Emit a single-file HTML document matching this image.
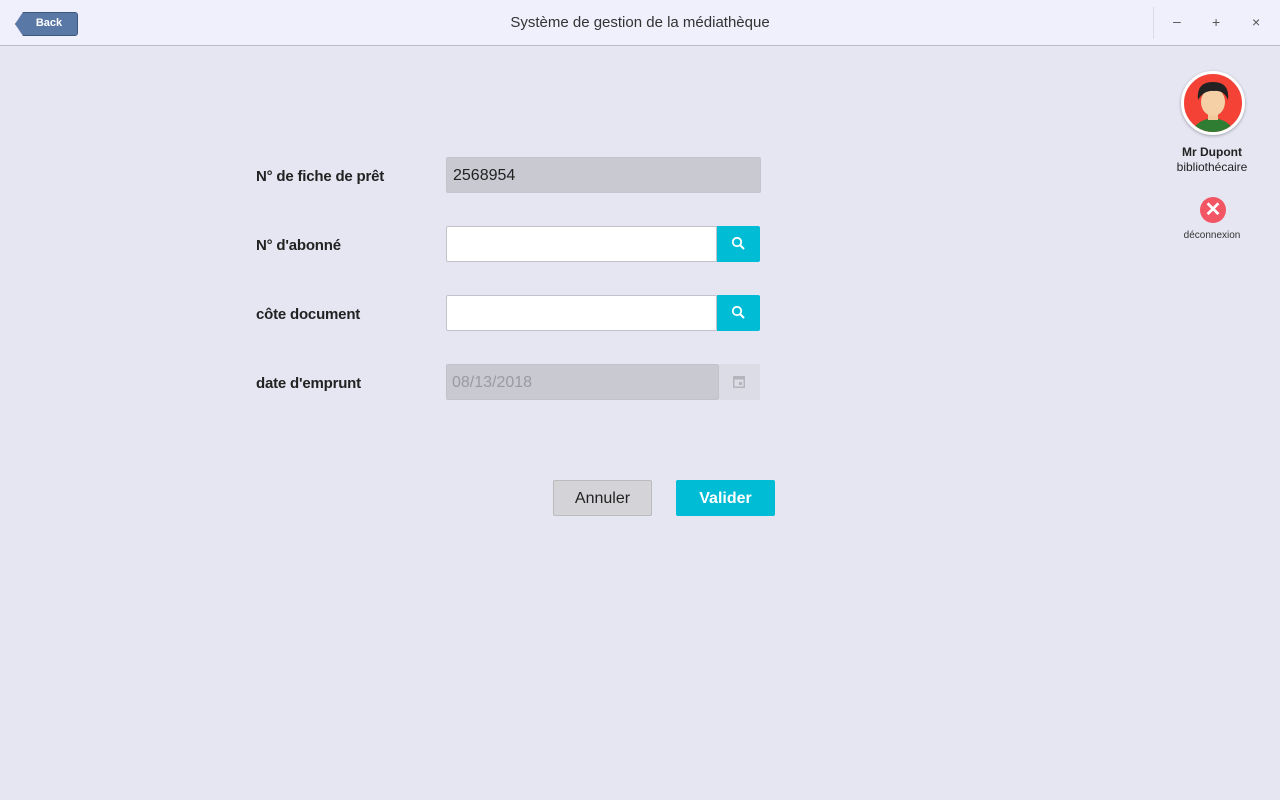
<!DOCTYPE html>
<html><head><style>
body{margin:0;width:1280px;height:800px;background:#e6e6f3;font-family:"Liberation Sans",sans-serif;position:relative;overflow:hidden}
.top{position:absolute;left:0;top:0;width:1280px;height:45px;background:#f0effc;border-bottom:1px solid #bcbcc4}
.title{position:absolute;left:0;width:1280px;top:14px;text-align:center;font-size:15px;color:#333}
.back{position:absolute;left:15px;top:12px;width:61px;height:22px;background:#5a78a6;border:1px solid #3d5780;border-radius:3px;clip-path:polygon(8px 0,100% 0,100% 100%,8px 100%,0 50%);color:#fff;font-weight:bold;font-size:11px;line-height:21px;text-align:center;text-indent:5px}
.wb{position:absolute;top:14px;font-size:14px;color:#555}
.lbl{position:absolute;left:256px;font-size:15px;font-weight:bold;color:#222;letter-spacing:-0.2px}
.in{position:absolute;left:446px;width:271px;height:34px;background:#fff;border:1px solid #c2c2ca;border-radius:2px;box-sizing:border-box}
.btn{position:absolute;left:717px;width:43px;height:36px;background:#00bcd4;border-radius:0 2px 2px 0}
</style></head><body>
<div class="top"><div class="back">Back</div>
<div style="position:absolute;left:1153px;top:7px;width:1px;height:32px;background:#dcdce6"></div>
<div class="title">Système de gestion de la médiathèque</div>
<div class="wb" style="left:1173px;top:13px">–</div><div class="wb" style="left:1212px">+</div><div class="wb" style="left:1252px">×</div></div>

<div class="lbl" style="top:168px">N° de fiche de prêt</div>
<div class="lbl" style="top:237px">N° d'abonné</div>
<div class="lbl" style="top:306px">côte document</div>
<div class="lbl" style="top:375px">date d'emprunt</div>

<div class="in" style="top:157px;width:315px;height:36px;background:#c9c9d1;border-color:#c4c4cc;font-size:16px;padding:9px 6px;color:#222">2568954</div>
<div class="in" style="top:226px;height:36px"></div><div class="btn" style="top:226px"><svg width="43" height="36"><circle cx="20" cy="16" r="4.2" fill="none" stroke="#fff" stroke-width="1.8"/><path d="M23 19l4 4" stroke="#fff" stroke-width="2"/></svg></div>
<div class="in" style="top:295px;height:36px"></div><div class="btn" style="top:295px"><svg width="43" height="36"><circle cx="20" cy="16" r="4.2" fill="none" stroke="#fff" stroke-width="1.8"/><path d="M23 19l4 4" stroke="#fff" stroke-width="2"/></svg></div>
<div class="in" style="top:364px;height:36px;width:273px;background:#c9c9d1;color:#9a9aa2;font-size:16px;padding:9px 5px">08/13/2018</div>
<div class="btn" style="top:364px;left:719px;width:41px;background:#dcdce6"><svg width="41" height="36"><rect x="14" y="12" width="12" height="12" rx="1" fill="#b4b4bc"/><rect x="15.5" y="15.5" width="9" height="7" fill="#dcdce6"/><rect x="20" y="18" width="3" height="3" fill="#b4b4bc"/></svg></div>

<div style="position:absolute;left:553px;top:480px;width:97px;height:34px;background:#d4d4d8;border:1px solid #bbb;border-radius:2px;text-align:center;line-height:36px;font-size:16px;color:#222">Annuler</div>
<div style="position:absolute;left:676px;top:480px;width:99px;height:36px;background:#00bcd4;border-radius:2px;text-align:center;line-height:38px;font-size:16px;color:#fff;font-weight:bold">Valider</div>

<div style="position:absolute;left:1181px;top:71px;width:58px;height:58px;border-radius:50%;background:#f44336;border:3px solid #fff;box-shadow:0 1px 3px rgba(0,0,0,.3);overflow:hidden">
<svg width="58" height="58"><path d="M8 58 Q12 46 29 44 Q46 46 50 58Z" fill="#2e7d32"/><rect x="24" y="36" width="10" height="10" fill="#f2c99a"/><ellipse cx="29" cy="28" rx="12" ry="14" fill="#f5d0a6"/><path d="M14 26 Q12 8 29 8 Q46 8 44 26 Q40 16 30 17 Q20 16 14 26Z" fill="#222"/></svg></div>
<div style="position:absolute;left:1150px;width:124px;top:145px;text-align:center;font-size:12px;color:#222;line-height:15px"><b>Mr Dupont</b><br>bibliothécaire</div>
<div style="position:absolute;left:1200px;top:197px;width:26px;height:26px;border-radius:50%;background:#f25563;color:#fff;text-align:center;line-height:26px;font-size:20px;font-weight:bold">✕</div>
<div style="position:absolute;left:1150px;width:124px;top:230px;text-align:center;font-size:10px;color:#333">déconnexion</div>
</body></html>
